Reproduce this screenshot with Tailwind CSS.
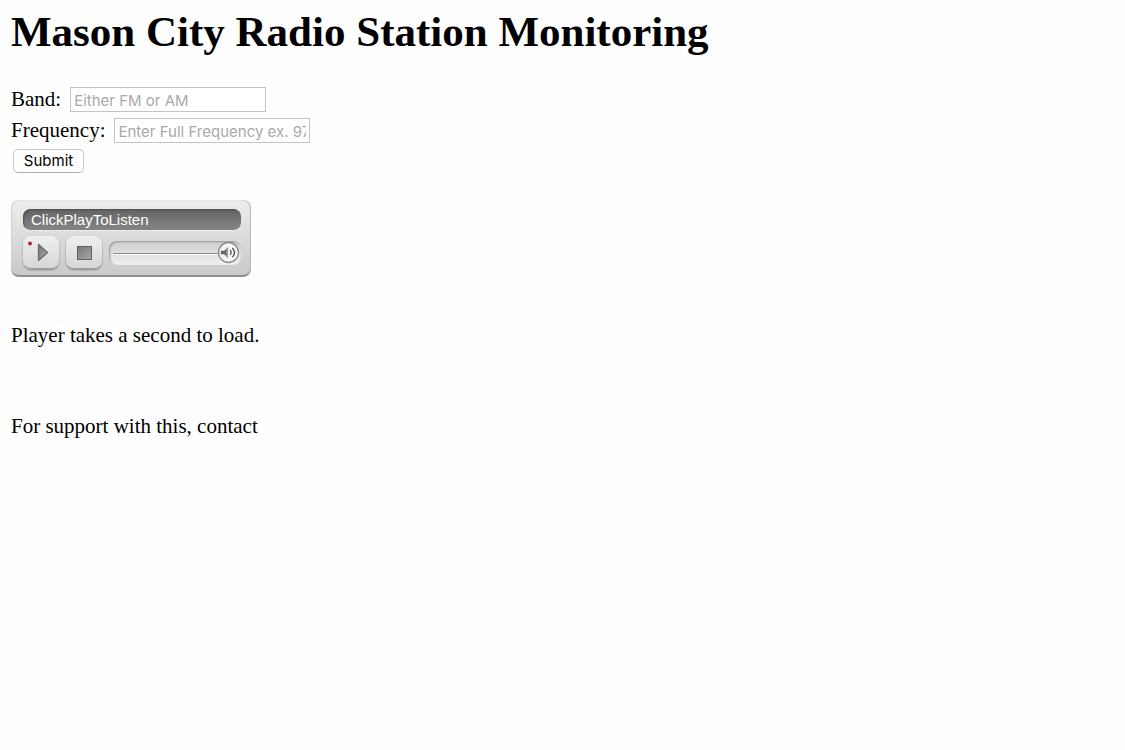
<!DOCTYPE html>
<html lang="en">
<head>
<meta charset="utf-8">
<meta name="viewport" content="width=device-width, initial-scale=1">
<title>Mason City Radio Station Monitoring</title>
<script src="https://cdn.jsdelivr.net/npm/@tailwindcss/browser@4"></script>
</head>
<body class="bg-[#fefefe] px-[11px] pt-2 font-['Liberation_Serif',serif] text-[21px] leading-6 text-black">
<h1 class="text-[43px] leading-12 font-bold">Mason City Radio Station Monitoring</h1>
<form class="mt-[31px] flex flex-col items-start gap-[6px]" onsubmit="return false">
  <div class="flex h-[25px] items-center gap-[9px]">
    <label for="band" class="-mt-[2px]">Band:</label>
    <input id="band" type="text" placeholder="Either FM or AM" class="h-[25px] w-[196px] border border-[#c3c3c3] bg-white px-[3px] pt-[2px] font-['Inter',sans-serif] text-[15px] text-black placeholder:text-[#a9a9a9]">
  </div>
  <div class="flex h-[25px] items-center gap-[9px]">
    <label for="frequency" class="-mt-[2px]">Frequency:</label>
    <input id="frequency" type="text" placeholder="Enter Full Frequency ex. 97.3" class="h-[25px] w-[196px] border border-[#c3c3c3] bg-white px-[3px] pt-[2px] font-['Inter',sans-serif] text-[15px] text-black placeholder:text-[#a9a9a9]">
  </div>
  <button type="submit" class="ml-[2px] h-6 w-[71px] rounded-[5px] border border-[#c8c8c8] border-b-[#adadad] bg-white font-['Inter',sans-serif] text-[15px] leading-5">Submit</button>
</form>
<section aria-label="Radio player" class="mt-[27px] flex h-[77px] w-60 flex-col rounded-[8px] border-b-2 border-[#8f8f8f] bg-linear-to-b from-[#eeeeee] to-[#c9c9c9] pt-[9px] pr-[10px] pl-3 shadow-[inset_-1px_0_1px_#b5b5b5,inset_1px_0_1px_#d0d0d0]">
  <div class="h-[22px] rounded-[8px] border-b border-[#eeeeee] bg-linear-to-b from-[#646464] to-[#858585] px-2 font-['Liberation_Sans',sans-serif] text-[15px] leading-[22px] text-white shadow-[inset_1px_1px_2px_#4c4c4c]">ClickPlayToListen</div>
  <div class="mt-[5px] flex items-center gap-[7px]">
    <button type="button" aria-label="Play" class="h-[33px] w-9 rounded-[8px] border-b border-[#a2a2a2] bg-linear-to-b from-[#f0f0f0] to-[#d6d6d6] shadow-[0_1px_2px_#858585]">
      <svg viewBox="0 0 36 32" class="h-8 w-9" aria-hidden="true">
        <defs><linearGradient id="metal" x1="0" y1="0" x2="1" y2="1"><stop offset="0" stop-color="#727272"/><stop offset="1" stop-color="#b0b0b0"/></linearGradient></defs>
        <circle cx="7" cy="7.5" r="1.9" fill="#b31f3c"/>
        <path d="M15.5 8.5v16l9-8z" fill="url(#metal)" stroke="#696969" stroke-width="1.3" stroke-linejoin="round"/>
      </svg>
    </button>
    <button type="button" aria-label="Stop" class="h-[33px] w-9 rounded-[8px] border-b border-[#a2a2a2] bg-linear-to-b from-[#f0f0f0] to-[#d6d6d6] shadow-[0_1px_2px_#858585]">
      <svg viewBox="0 0 36 32" class="h-8 w-9" aria-hidden="true">
        <defs><linearGradient id="steel" x1="0" y1="0" x2="1" y2="1"><stop offset="0" stop-color="#777777"/><stop offset="1" stop-color="#a8a8a8"/></linearGradient></defs>
        <rect x="11.5" y="10.5" width="14" height="13" fill="url(#steel)" stroke="#5f5f5f"/>
      </svg>
    </button>
    <div class="relative h-6 min-w-0 flex-1 rounded-[8px] bg-linear-to-b from-[#cfcfcf] to-[#f0f0f0] shadow-[inset_1px_1px_2px_#979797]">
      <div class="absolute top-[12px] right-5 left-1 h-[2px] border-t border-[#8c8c8c] bg-white"></div>
      <button type="button" aria-label="Volume" class="absolute top-0 right-px size-[23px]">
        <svg viewBox="0 0 23 23" class="size-[23px]" aria-hidden="true">
          <circle cx="11.5" cy="11.5" r="10" fill="#f5f5f5" stroke="#8b8b8b" stroke-width="1.4"/>
          <path d="M3.8 9.8h3.2L11 6.3v10.4l-4-3.5H3.8z" fill="#666666"/>
          <path d="M9 8 11 6.3v10.4L9 15z" fill="#949494"/>
          <path d="M13.2 9.2q1.8 2.3 0 4.6M15.3 6.8q4.4 4.7 0 9.4" fill="none" stroke="#444444" stroke-width="1.2"/>
        </svg>
      </button>
    </div>
  </div>
</section>
<p class="mt-[46px]">Player takes a second to load.</p>
<p class="mt-[67px]">For support with this, contact</p>
</body>
</html>
